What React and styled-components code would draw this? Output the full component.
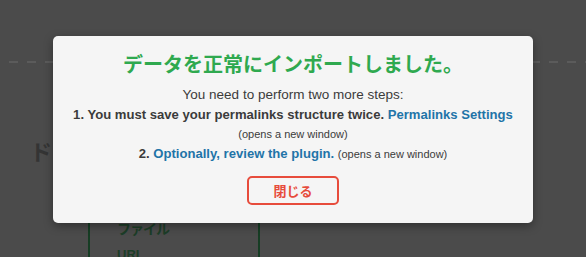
import React from "react";
import styled, { createGlobalStyle } from "styled-components";

const GlobalStyle = createGlobalStyle`
  html, body {
    margin: 0;
    padding: 0;
    background: #4b4b4b;
    font-family: "Liberation Sans", "Noto Sans CJK JP", Arial, sans-serif;
  }
`;

const Screen = styled.div`
  position: relative;
  width: 586px;
  height: 257px;
  overflow: hidden;
  background: #4b4b4b;
`;

// the page that sits behind the dimmed overlay
const Backdrop = styled.div`
  padding-top: 61px;
`;

const DashedRule = styled.div`
  margin-left: 9px;
  height: 2px;
  background-image: linear-gradient(to right, #5b5b5b 9px, transparent 9px);
  background-size: 18px 2px;
`;

const PageHeading = styled.h2`
  margin: 74px 0 0 30px;
  font-size: 22px;
  font-weight: 700;
  color: #343434;
  font-family: "Noto Sans CJK JP", sans-serif;
  line-height: 26px;
`;

const FileBox = styled.div`
  margin: 40px 0 0 88px;
  width: 172px;
  height: 80px;
  border-left: 2px solid #163d24;
  border-right: 2px solid #163d24;
  padding: 15px 0 0 27px;
  box-sizing: border-box;
`;

const FileLabel = styled.div`
  font-family: "Noto Sans CJK JP", sans-serif;
  font-weight: 700;
  font-size: 14px;
  letter-spacing: -1px;
  color: #1c3d27;
  line-height: 20px;
`;

const UrlLabel = styled(FileLabel)`
  font-family: "Liberation Sans", sans-serif;
  font-size: 13px;
  letter-spacing: 0;
  margin-top: 7px;
`;

const Modal = styled.div`
  position: absolute;
  left: 53px;
  top: 36px;
  width: 480px;
  box-sizing: border-box;
  padding: 14px 10px 18px;
  background: #f5f5f5;
  border-radius: 5px;
  box-shadow: 0 3px 10px rgba(0, 0, 0, 0.35);
  display: flex;
  flex-direction: column;
  align-items: center;
  text-align: center;
`;

const Title = styled.h1`
  margin: 0 0 7px;
  font-family: "Noto Sans CJK JP", sans-serif;
  font-size: 20px;
  line-height: 28px;
  font-weight: 700;
  color: #2fa94f;
`;

const Line = styled.p`
  margin: 0;
  font-size: ${(p) => (p.small ? "11px" : p.bold ? "13.1px" : "13.5px")};
  line-height: ${(p) => (p.small ? "19px" : "20px")};
  font-weight: ${(p) => (p.bold ? 700 : 400)};
  color: #3b3b3b;
`;

const Link = styled.a`
  color: #1f74a8;
  font-weight: 700;
  text-decoration: none;
`;

const Note = styled.span`
  font-size: 11px;
  font-weight: 400;
  color: #3b3b3b;
`;

const CloseButton = styled.button`
  margin-top: 12px;
  width: 92px;
  height: 29px;
  border: 2px solid #e74c3c;
  border-radius: 5px;
  background: transparent;
  color: #e74c3c;
  font-family: "Noto Sans CJK JP", sans-serif;
  font-weight: 700;
  font-size: 13px;
  line-height: 1;
  cursor: pointer;
`;

export default function App() {
  return (
    <Screen>
      <GlobalStyle />
      <Backdrop>
        <DashedRule />
        <PageHeading>ドメイン設定</PageHeading>
        <FileBox>
          <FileLabel>ファイル</FileLabel>
          <UrlLabel>URL</UrlLabel>
        </FileBox>
      </Backdrop>

      <Modal>
        <Title>データを正常にインポートしました。</Title>
        <Line>You need to perform two more steps:</Line>
        <Line bold>
          1. You must save your permalinks structure twice.{" "}
          <Link href="#">Permalinks Settings</Link>
        </Line>
        <Line small>(opens a new window)</Line>
        <Line bold>
          2. <Link href="#">Optionally, review the plugin.</Link>{" "}
          <Note>(opens a new window)</Note>
        </Line>
        <CloseButton>閉じる</CloseButton>
      </Modal>
    </Screen>
  );
}
